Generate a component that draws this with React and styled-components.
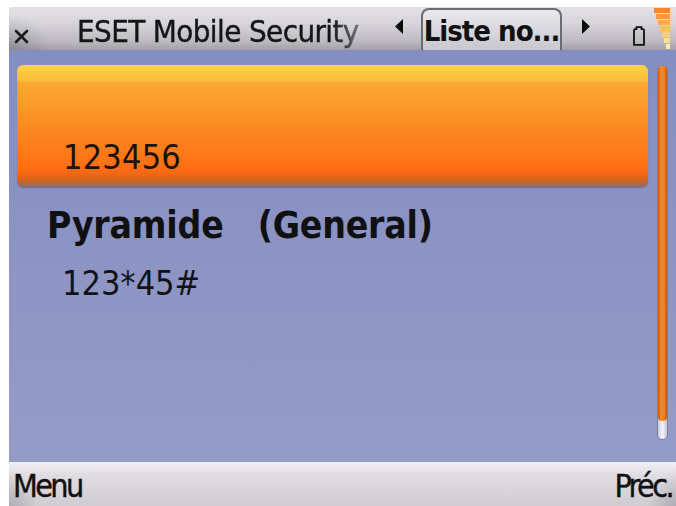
import React from 'react'
import styled, { createGlobalStyle } from 'styled-components'

const GlobalStyle = createGlobalStyle`
  html, body {
    margin: 0;
    padding: 0;
    background: #ffffff;
  }
  body {
    font-family: "DejaVu Sans Condensed", "DejaVu Sans", sans-serif;
  }
`

const Page = styled.div`
  width: 676px;
  height: 506px;
  padding: 7px 0 0 9px;
  box-sizing: border-box;
  overflow: hidden;
  background: #ffffff;
`

const Screen = styled.div`
  width: 667px;
  height: 499px;
  display: flex;
  flex-direction: column;
  overflow: hidden;
`

const TitleBar = styled.div`
  height: 43px;
  display: flex;
  align-items: center;
  background:
    radial-gradient(ellipse 60px 50px at 0 100%, rgba(90, 86, 100, 0.35), transparent 70%),
    linear-gradient(#e4e2e7 0%, #d6d4da 40%, #bcb9c0 80%, #a3a0a9 100%);
`

const CloseMark = styled.span`
  width: 15px;
  margin-left: 5px;
  margin-top: 16px;
  display: flex;
`

const TitleText = styled.div`
  margin-left: 48px;
  width: 300px;
  padding-top: 4px;
  font-size: 31px;
  letter-spacing: -0.6px;
  -webkit-text-stroke: 0.4px #151515;
  color: #151515;
  white-space: nowrap;
  overflow: hidden;
  -webkit-mask-image: linear-gradient(to right, #000 85%, rgba(0, 0, 0, 0.25) 98%);
  mask-image: linear-gradient(to right, #000 85%, rgba(0, 0, 0, 0.25) 98%);
`

const Arrow = styled.span`
  display: flex;
  margin-left: ${p => p.$gap}px;
  margin-top: -4px;
`

const Tab = styled.div`
  align-self: flex-end;
  margin-left: ${p => p.$gap}px;
  width: 141px;
  height: 42px;
  box-sizing: border-box;
  border: 2px solid #6c6a72;
  border-bottom: none;
  border-radius: 8px 8px 0 0;
  background: linear-gradient(#ebe9ee, #d6d4db 60%, #c9c7ce);
  font-size: 29px;
  font-weight: bold;
  letter-spacing: -1px;
  white-space: nowrap;
  color: #111;
  display: flex;
  align-items: center;
  justify-content: center;
  padding-top: 2px;
`

const Battery = styled.span`
  display: flex;
  margin-left: 42px;
  margin-top: 14px;
`

const Signal = styled.span`
  display: flex;
  margin-left: 9px;
  align-self: stretch;
`

const Content = styled.div`
  flex: 1;
  display: flex;
  padding: 15px 0 0 8px;
  background: linear-gradient(#848ec1, #8c94c4 50%, #959cc8);
`

const List = styled.div`
  width: 631px;
  display: flex;
  flex-direction: column;
`

const Highlight = styled.div`
  height: 122px;
  box-sizing: border-box;
  border-radius: 6px;
  padding: 0 0 10px 46px;
  display: flex;
  align-items: flex-end;
  background: linear-gradient(
    #fdd24c 0%,
    #f9c13c 12%,
    #fba833 15%,
    #fc9529 38%,
    #fe7a1a 70%,
    #ff6c12 86%,
    #d9621a 94%,
    #8d6f6c 100%
  );
  box-shadow: 0 1px 1px rgba(70, 60, 80, 0.4);
  font-size: 34px;
  letter-spacing: 0.2px;
  color: #1b1208;
`

const ItemTitle = styled.div`
  margin-top: 17px;
  padding-left: 30px;
  font-size: 37px;
  font-weight: bold;
  letter-spacing: -0.2px;
  color: #101010;
  white-space: pre;
`

const ItemSub = styled.div`
  margin-top: 16px;
  padding-left: 45px;
  font-size: 34px;
  color: #121212;
`

const ScrollTrack = styled.div`
  margin-left: 9px;
  width: 11px;
  height: 375px;
  box-sizing: border-box;
  border-radius: 5px;
  border: 1px solid #7d7f96;
  background: linear-gradient(to right, #c8cbe2, #f4f4fa 50%, #c2c4dc);
  display: flex;
  flex-direction: column;
  overflow: hidden;
`

const ScrollThumb = styled.div`
  height: 355px;
  border-radius: 4px;
  background: linear-gradient(to right, #d4580c, #ff8d22 40%, #ff7a12 70%, #c9520a);
`

const SoftkeyBar = styled.div`
  height: 44px;
  display: flex;
  align-items: center;
  justify-content: space-between;
  padding: 0 4px 0 4px;
  background:
    radial-gradient(ellipse 40px 50px at 0 100%, rgba(100, 96, 110, 0.3), transparent 70%),
    radial-gradient(ellipse 40px 50px at 100% 100%, rgba(100, 96, 110, 0.3), transparent 70%),
    linear-gradient(#f2f0f4 0%, #e0dde2 30%, #d0ccd2 100%);
  font-size: 32px;
  letter-spacing: -2.6px;
  -webkit-text-stroke: 0.4px #111;
  color: #111;
`

const SoftKey = styled.span`
  line-height: 1;
  padding-top: 4px;
`

function SignalBars() {
  const bars = [
    { w: 16, c: '#f6862e' },
    { w: 14, c: '#f89a3a' },
    { w: 12, c: '#f9ad4a' },
    { w: 10, c: '#fbbf5e' },
    { w: 8, c: '#fcd074' },
    { w: 6, c: '#fddf92' },
    { w: 4, c: '#feebb4' },
  ]
  return (
    <svg width="16" height="43" viewBox="0 0 16 43">
      {bars.map((b, i) => (
        <rect key={i} x={16 - b.w} y={i * 6 + 1} width={b.w} height={5} fill={b.c} />
      ))}
    </svg>
  )
}

export default function App() {
  return (
    <Page>
      <GlobalStyle />
      <Screen>
        <TitleBar>
          <CloseMark>
            <svg width="15" height="15" viewBox="0 0 15 15">
              <path d="M2 2 L13 13 M13 2 L2 13" stroke="#1a1a1a" strokeWidth="2.6" strokeLinecap="round" />
            </svg>
          </CloseMark>
          <TitleText>ESET Mobile Security</TitleText>
          <Arrow $gap={17}>
            <svg width="10" height="15" viewBox="0 0 10 15">
              <path d="M9 0 L9 15 L1 7.5 Z" fill="#0c0c0c" />
            </svg>
          </Arrow>
          <Tab $gap={17}>Liste no...</Tab>
          <Arrow $gap={19}>
            <svg width="10" height="15" viewBox="0 0 10 15">
              <path d="M1 0 L1 15 L9 7.5 Z" fill="#0c0c0c" />
            </svg>
          </Arrow>
          <Battery>
            <svg width="12" height="20" viewBox="0 0 12 20">
              <path
                d="M3.5 1.2 H8.5 V3.2 H10 Q11 3.2 11 4.2 V18.8 H1 V4.2 Q1 3.2 2 3.2 H3.5 Z"
                fill="none"
                stroke="#101010"
                strokeWidth="1.8"
              />
            </svg>
          </Battery>
          <Signal>
            <SignalBars />
          </Signal>
        </TitleBar>
        <Content>
          <List>
            <Highlight>123456</Highlight>
            <ItemTitle>{'Pyramide   (General)'}</ItemTitle>
            <ItemSub>123*45#</ItemSub>
          </List>
          <ScrollTrack>
            <ScrollThumb />
          </ScrollTrack>
        </Content>
        <SoftkeyBar>
          <SoftKey>Menu</SoftKey>
          <SoftKey>Préc.</SoftKey>
        </SoftkeyBar>
      </Screen>
    </Page>
  )
}
